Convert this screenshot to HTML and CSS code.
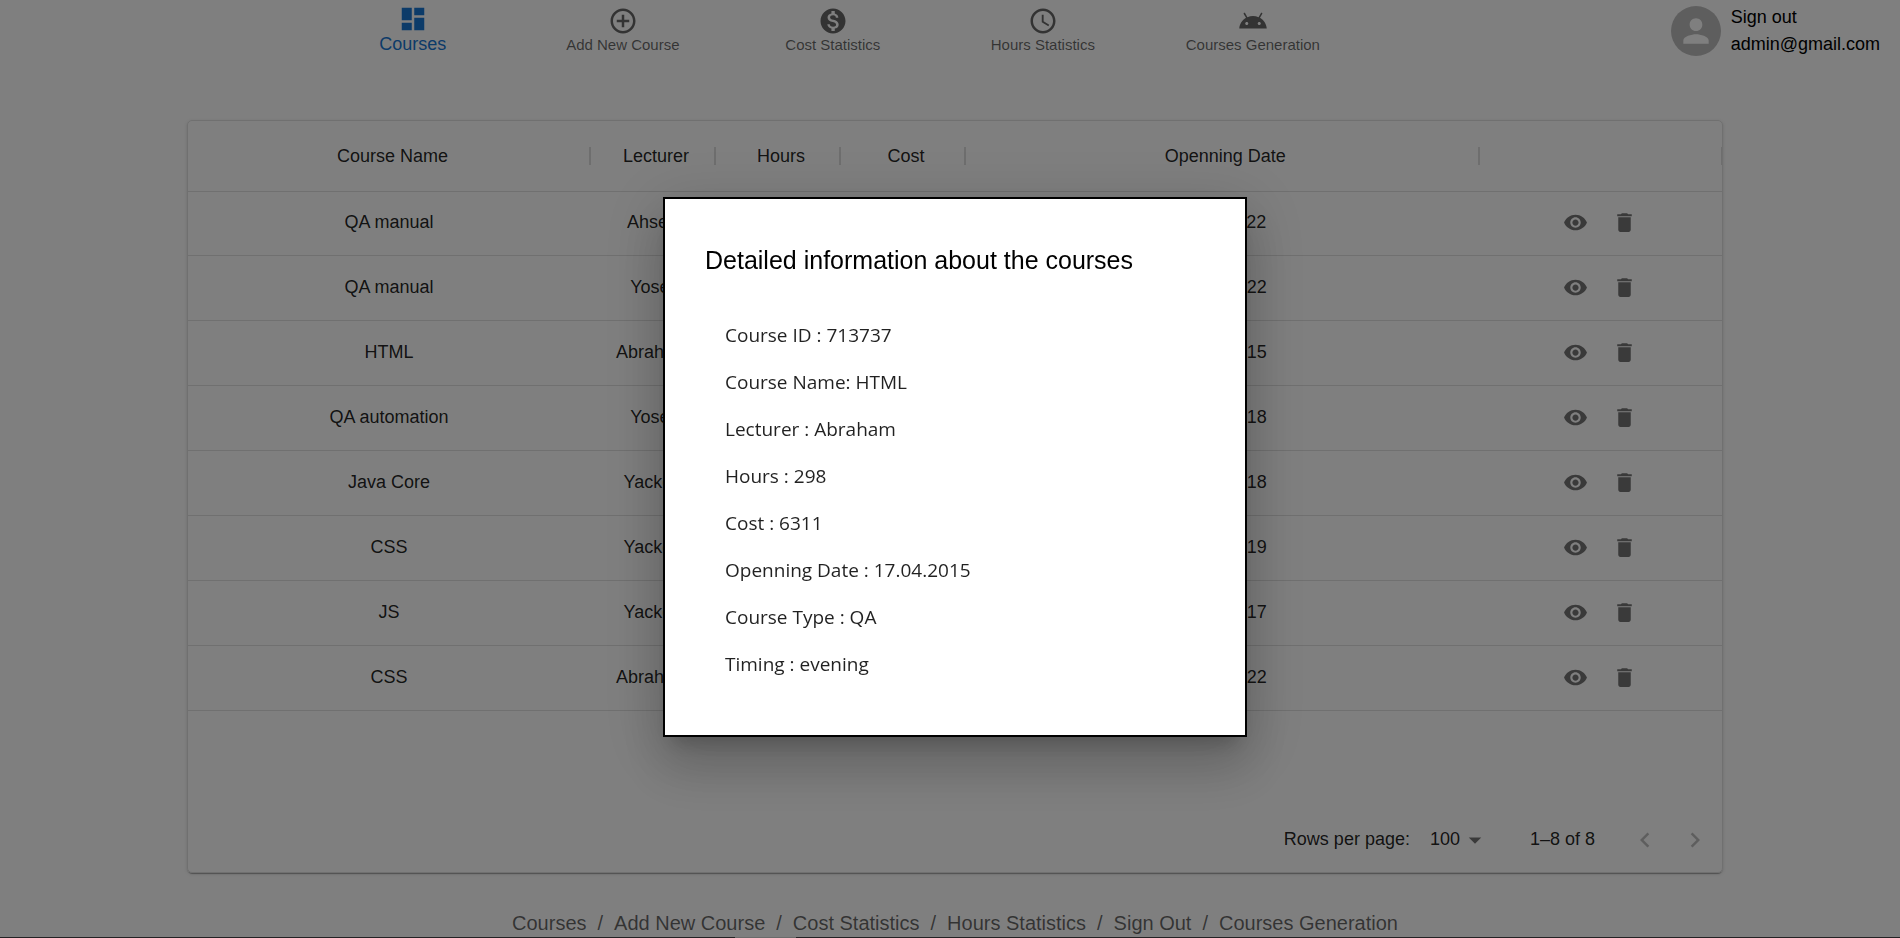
FILE: index.html
```
<!DOCTYPE html>
<html lang="en">
<head>
<meta charset="utf-8">
<title>Courses</title>
<link rel="stylesheet" href="styles.css">
</head>
<body>
<svg class="sprite" aria-hidden="true">
  <symbol id="i-dashboard" viewBox="0 0 24 24"><path d="M3 13h8V3H3v10zm0 8h8v-6H3v6zm10 0h8V11h-8v10zm0-18v6h8V3h-8z"/></symbol>
  <symbol id="i-add" viewBox="0 0 24 24"><path d="M13 7h-2v4H7v2h4v4h2v-4h4v-2h-4V7zm-1-5C6.48 2 2 6.48 2 12s4.480 10 10 10 10-4.480 10-10S17.520 2 12 2zm0 18c-4.410 0-8-3.590-8-8s3.590-8 8-8 8 3.590 8 8-3.590 8-8 8z"/></symbol>
  <symbol id="i-cost" viewBox="0 0 24 24"><path d="M12 2C6.480 2 2 6.480 2 12s4.480 10 10 10 10-4.480 10-10S17.520 2 12 2zm1.410 16.090V20h-2.670v-1.930c-1.710-.36-3.160-1.460-3.270-3.400h1.960c.1 1.050.82 1.870 2.650 1.870 1.960 0 2.400-.98 2.400-1.590 0-.83-.44-1.610-2.670-2.140-2.480-.6-4.180-1.620-4.180-3.670 0-1.720 1.390-2.840 3.110-3.210V4h2.670v1.950c1.860.45 2.790 1.860 2.850 3.390H14.300c-.05-1.110-.64-1.870-2.220-1.870-1.500 0-2.400.68-2.400 1.640 0 .84.65 1.390 2.670 1.910s4.180 1.390 4.180 3.910c-.01 1.830-1.380 2.830-3.120 3.160z"/></symbol>
  <symbol id="i-clock" viewBox="0 0 24 24"><path d="M11.990 2C6.470 2 2 6.480 2 12s4.470 10 9.990 10C17.520 22 22 17.520 22 12S17.520 2 11.990 2zM12 20c-4.420 0-8-3.580-8-8s3.580-8 8-8 8 3.580 8 8-3.580 8-8 8zm.5-13H11v6l5.250 3.150.75-1.230-4.500-2.670z"/></symbol>
  <symbol id="i-android" viewBox="0 0 24 24"><path d="M17.600 9.480l1.840-3.180c.16-.31.04-.69-.26-.85-.29-.15-.65-.06-.83.22l-1.880 3.240c-2.860-1.210-6.080-1.210-8.940 0L5.650 5.670c-.19-.29-.58-.38-.87-.2-.28.18-.37.54-.22.83L6.400 9.480C3.300 11.250 1.280 14.440 1 18h22c-.28-3.560-2.300-6.750-5.400-8.520zM7 15.250c-.69 0-1.250-.56-1.250-1.250S6.310 12.750 7 12.750 8.250 13.310 8.250 14 7.690 15.250 7 15.250zm10 0c-.69 0-1.250-.56-1.250-1.250s.56-1.250 1.250-1.250 1.250.56 1.250 1.250-.56 1.250-1.250 1.250z"/></symbol>
  <symbol id="i-person" viewBox="0 0 24 24"><path d="M12 12c2.210 0 4-1.790 4-4s-1.790-4-4-4-4 1.790-4 4 1.790 4 4 4zm0 2c-2.670 0-8 1.340-8 4v2h16v-2c0-2.660-5.330-4-8-4z"/></symbol>
  <symbol id="i-eye" viewBox="0 0 24 24"><path d="M12 4.500C7 4.500 2.730 7.610 1 12c1.730 4.390 6 7.500 11 7.500s9.270-3.110 11-7.500c-1.730-4.390-6-7.500-11-7.500zM12 17c-2.760 0-5-2.240-5-5s2.240-5 5-5 5 2.240 5 5-2.240 5-5 5zm0-8c-1.660 0-3 1.340-3 3s1.340 3 3 3 3-1.340 3-3-1.340-3-3-3z"/></symbol>
  <symbol id="i-trash" viewBox="0 0 24 24"><path d="M6 19c0 1.100.9 2 2 2h8c1.100 0 2-.9 2-2V7H6v12zM19 4h-3.500l-1-1h-5l-1 1H5v2h14V4z"/></symbol>
  <symbol id="i-down" viewBox="0 0 24 24"><path d="M7 10l5 5 5-5z"/></symbol>
  <symbol id="i-left" viewBox="0 0 24 24"><path d="M15.410 16.590L10.830 12l4.580-4.590L14 6l-6 6 6 6 1.410-1.410z"/></symbol>
  <symbol id="i-right" viewBox="0 0 24 24"><path d="M8.590 16.590L13.170 12 8.590 7.410 10 6l6 6-6 6-1.410-1.410z"/></symbol>
</svg>

<div class="page">
  <header class="topbar">
    <nav class="tabs" aria-label="Main">
      <a class="tab tab-active" href="#"><svg class="icon-lg"><use href="#i-dashboard"/></svg>Courses</a>
      <a class="tab" href="#"><svg class="icon-lg"><use href="#i-add"/></svg>Add New Course</a>
      <a class="tab" href="#"><svg class="icon-lg"><use href="#i-cost"/></svg>Cost Statistics</a>
      <a class="tab" href="#"><svg class="icon-lg"><use href="#i-clock"/></svg>Hours Statistics</a>
      <a class="tab" href="#"><svg class="icon-lg"><use href="#i-android"/></svg>Courses Generation</a>
    </nav>
    <div class="account">
      <span class="avatar"><svg class="avatar-icon"><use href="#i-person"/></svg></span>
      <div class="account-text"><a href="#">Sign out</a><span>admin@gmail.com</span></div>
    </div>
  </header>

  <main class="content">
    <section class="card">
      <table class="grid">
        <colgroup><col class="col-name"><col class="col-small"><col class="col-small"><col class="col-small"><col class="col-date"><col></colgroup>
        <thead><tr><th>Course Name</th><th>Lecturer</th><th>Hours</th><th>Cost</th><th>Openning Date</th><th></th></tr></thead>
        <tbody>
          <tr><td>QA manual</td><td>Ahsen</td><td>312</td><td>7200</td><td>11.03.2022</td><td class="actions"><button aria-label="View"><svg class="icon"><use href="#i-eye"/></svg></button><button aria-label="Delete"><svg class="icon"><use href="#i-trash"/></svg></button></td></tr>
          <tr><td>QA manual</td><td>Yosef</td><td>250</td><td>5400</td><td>20.06.2022</td><td class="actions"><button aria-label="View"><svg class="icon"><use href="#i-eye"/></svg></button><button aria-label="Delete"><svg class="icon"><use href="#i-trash"/></svg></button></td></tr>
          <tr><td>HTML</td><td>Abraham</td><td>298</td><td>6311</td><td>17.04.2015</td><td class="actions"><button aria-label="View"><svg class="icon"><use href="#i-eye"/></svg></button><button aria-label="Delete"><svg class="icon"><use href="#i-trash"/></svg></button></td></tr>
          <tr><td>QA automation</td><td>Yosef</td><td>340</td><td>8100</td><td>05.09.2018</td><td class="actions"><button aria-label="View"><svg class="icon"><use href="#i-eye"/></svg></button><button aria-label="Delete"><svg class="icon"><use href="#i-trash"/></svg></button></td></tr>
          <tr><td>Java Core</td><td>Yackov</td><td>400</td><td>9500</td><td>12.02.2018</td><td class="actions"><button aria-label="View"><svg class="icon"><use href="#i-eye"/></svg></button><button aria-label="Delete"><svg class="icon"><use href="#i-trash"/></svg></button></td></tr>
          <tr><td>CSS</td><td>Yackov</td><td>220</td><td>5200</td><td>23.10.2019</td><td class="actions"><button aria-label="View"><svg class="icon"><use href="#i-eye"/></svg></button><button aria-label="Delete"><svg class="icon"><use href="#i-trash"/></svg></button></td></tr>
          <tr><td>JS</td><td>Yackov</td><td>360</td><td>8800</td><td>08.05.2017</td><td class="actions"><button aria-label="View"><svg class="icon"><use href="#i-eye"/></svg></button><button aria-label="Delete"><svg class="icon"><use href="#i-trash"/></svg></button></td></tr>
          <tr><td>CSS</td><td>Abraham</td><td>275</td><td>6000</td><td>14.01.2022</td><td class="actions"><button aria-label="View"><svg class="icon"><use href="#i-eye"/></svg></button><button aria-label="Delete"><svg class="icon"><use href="#i-trash"/></svg></button></td></tr>
        </tbody>
      </table>
      <div class="pager">
        <label for="rows">Rows per page:</label>
        <span class="select-wrap">
          <select id="rows"><option>100</option></select>
          <svg class="select-arrow"><use href="#i-down"/></svg>
        </span>
        <span class="range">1–8 of 8</span>
        <div class="pager-nav">
          <button disabled aria-label="Previous page"><svg class="icon-lg"><use href="#i-left"/></svg></button>
          <button disabled aria-label="Next page"><svg class="icon-lg"><use href="#i-right"/></svg></button>
        </div>
      </div>
    </section>
  </main>

  <footer class="crumbs">
    <a href="#">Courses</a><span>/</span><a href="#">Add New Course</a><span>/</span><a href="#">Cost Statistics</a><span>/</span><a href="#">Hours Statistics</a><span>/</span><a href="#">Sign Out</a><span>/</span><a href="#">Courses Generation</a>
  </footer>
</div>

<div class="backdrop">
  <div class="modal" role="dialog" aria-modal="true" aria-labelledby="modal-title">
    <h2 class="modal-title" id="modal-title">Detailed information about the courses</h2>
    <ul class="details">
      <li>Course ID : 713737</li>
      <li>Course Name: HTML</li>
      <li>Lecturer : Abraham</li>
      <li>Hours : 298</li>
      <li>Cost : 6311</li>
      <li>Openning Date : 17.04.2015</li>
      <li>Course Type : QA</li>
      <li>Timing : evening</li>
    </ul>
  </div>
</div>
<div class="bottom-edge"></div>
</body>
</html>
```
FILE: styles.css
```
* { box-sizing: border-box; }

body {
  margin: 0;
  background: #fff;
  color: rgba(0, 0, 0, 0.87);
  font-family: "Liberation Sans", Arial, sans-serif;
  font-size: 18px;
  overflow: hidden;
}

a { color: inherit; text-decoration: none; }
svg { display: block; fill: currentColor; }
button { border: 0; padding: 0; background: none; color: inherit; }

.sprite { position: absolute; width: 0; height: 0; }
.icon { width: 25px; height: 25px; }
.icon-lg { width: 30px; height: 30px; }

.page { padding-left: 10px; }

/* Top navigation */
.topbar {
  display: flex;
  align-items: flex-start;
  justify-content: space-between;
  height: 70px;
  padding-right: 20px;
}
.tabs {
  display: flex;
  flex: 1;
  justify-content: center;
  padding-right: 15px;
}
.tab {
  display: flex;
  flex-direction: column;
  align-items: center;
  width: 210px;
  padding-top: 6px;
  color: rgba(0, 0, 0, 0.6);
  font-size: 15px;
  line-height: 18px;
}
.tab-active {
  padding-top: 4px;
  color: #1976d2;
  font-size: 18px;
  line-height: 20px;
}

.account { display: flex; gap: 10px; padding-top: 4px; color: #000; }
.avatar {
  display: flex;
  align-items: center;
  justify-content: center;
  width: 50px;
  height: 50px;
  margin-top: 2px;
  border-radius: 50%;
  background: #bdbdbd;
  color: #fff;
}
.avatar-icon { width: 38px; height: 38px; }
.account-text { display: flex; flex-direction: column; line-height: 27px; }

/* Courses grid */
.content { padding: 50px 177px 0; }
.card {
  overflow: hidden;
  border: 1px solid #e0e0e0;
  border-radius: 5px;
  box-shadow: 0 3px 1px -2px rgba(0, 0, 0, 0.2), 0 1px 1px rgba(0, 0, 0, 0.14), 0 1px 4px rgba(0, 0, 0, 0.12);
}
.grid {
  width: 100%;
  table-layout: fixed;
  border-collapse: separate;
  border-spacing: 0;
  text-align: center;
}
.col-name { width: 26.2%; }
.col-small { width: 125px; }
.col-date { width: 33.5%; }
.grid th {
  position: relative;
  height: 71px;
  padding: 0 0 0 7px;
  border-bottom: 1px solid #e0e0e0;
  font-weight: 400;
}
.grid th::after {
  content: "";
  position: absolute;
  top: 26px;
  right: -1px;
  width: 2px;
  height: 18px;
  background: #dcdcdc;
}
.grid td {
  height: 65px;
  padding: 0 0 2px;
  border-bottom: 1px solid #e0e0e0;
}
.grid tbody tr:first-child td { height: 64px; }
.actions button {
  display: inline-block;
  margin: 0 12px;
  color: rgba(0, 0, 0, 0.54);
  vertical-align: middle;
}
.actions { font-size: 0; }

.pager {
  display: flex;
  align-items: center;
  justify-content: flex-end;
  height: 65px;
  margin-top: 96px;
  padding-right: 2px;
}
.select-wrap {
  position: relative;
  display: flex;
  align-items: center;
  margin: 0 40px 0 20px;
}
.select-wrap select {
  width: 60px;
  padding: 0 0 2px;
  border: 0;
  appearance: none;
  background: none;
  color: inherit;
  font: inherit;
}
.select-arrow {
  position: absolute;
  right: 0;
  width: 30px;
  height: 30px;
  color: rgba(0, 0, 0, 0.54);
  pointer-events: none;
}
.range { margin-right: 25px; }
.pager-nav { display: flex; color: rgba(0, 0, 0, 0.26); }
.pager-nav button { padding: 10px; }

/* Footer links */
.crumbs {
  display: flex;
  justify-content: center;
  gap: 11px;
  padding-top: 35px;
  color: rgba(0, 0, 0, 0.6);
  font-size: 20px;
  line-height: 30px;
}

/* Dialog */
.backdrop {
  position: fixed;
  inset: 0;
  display: flex;
  align-items: center;
  justify-content: center;
  padding: 0 0 4px 10px;
  background: rgba(0, 0, 0, 0.5);
}
.modal {
  width: 584px;
  padding: 40px 40px 47px;
  border: 2px solid #000;
  background: #fff;
  box-shadow: 0 14px 19px -9px rgba(0, 0, 0, 0.2), 0 30px 48px 4px rgba(0, 0, 0, 0.14), 0 11px 58px 10px rgba(0, 0, 0, 0.12);
}
.modal-title {
  margin: 0 0 31px;
  color: #000;
  font-size: 25px;
  font-weight: 400;
  line-height: 42px;
}
.details {
  margin: 0;
  padding: 0 20px;
  list-style: none;
  font-family: "Open Sans", "Noto Sans", sans-serif;
  font-size: 19px;
  line-height: 47px;
}

.bottom-edge {
  position: fixed;
  right: 0;
  bottom: 0;
  left: 0;
  height: 1px;
  background: linear-gradient(to right, #242224 735px, #6a6a6a 735px, #6a6a6a 796px, #242224 796px);
}
```
